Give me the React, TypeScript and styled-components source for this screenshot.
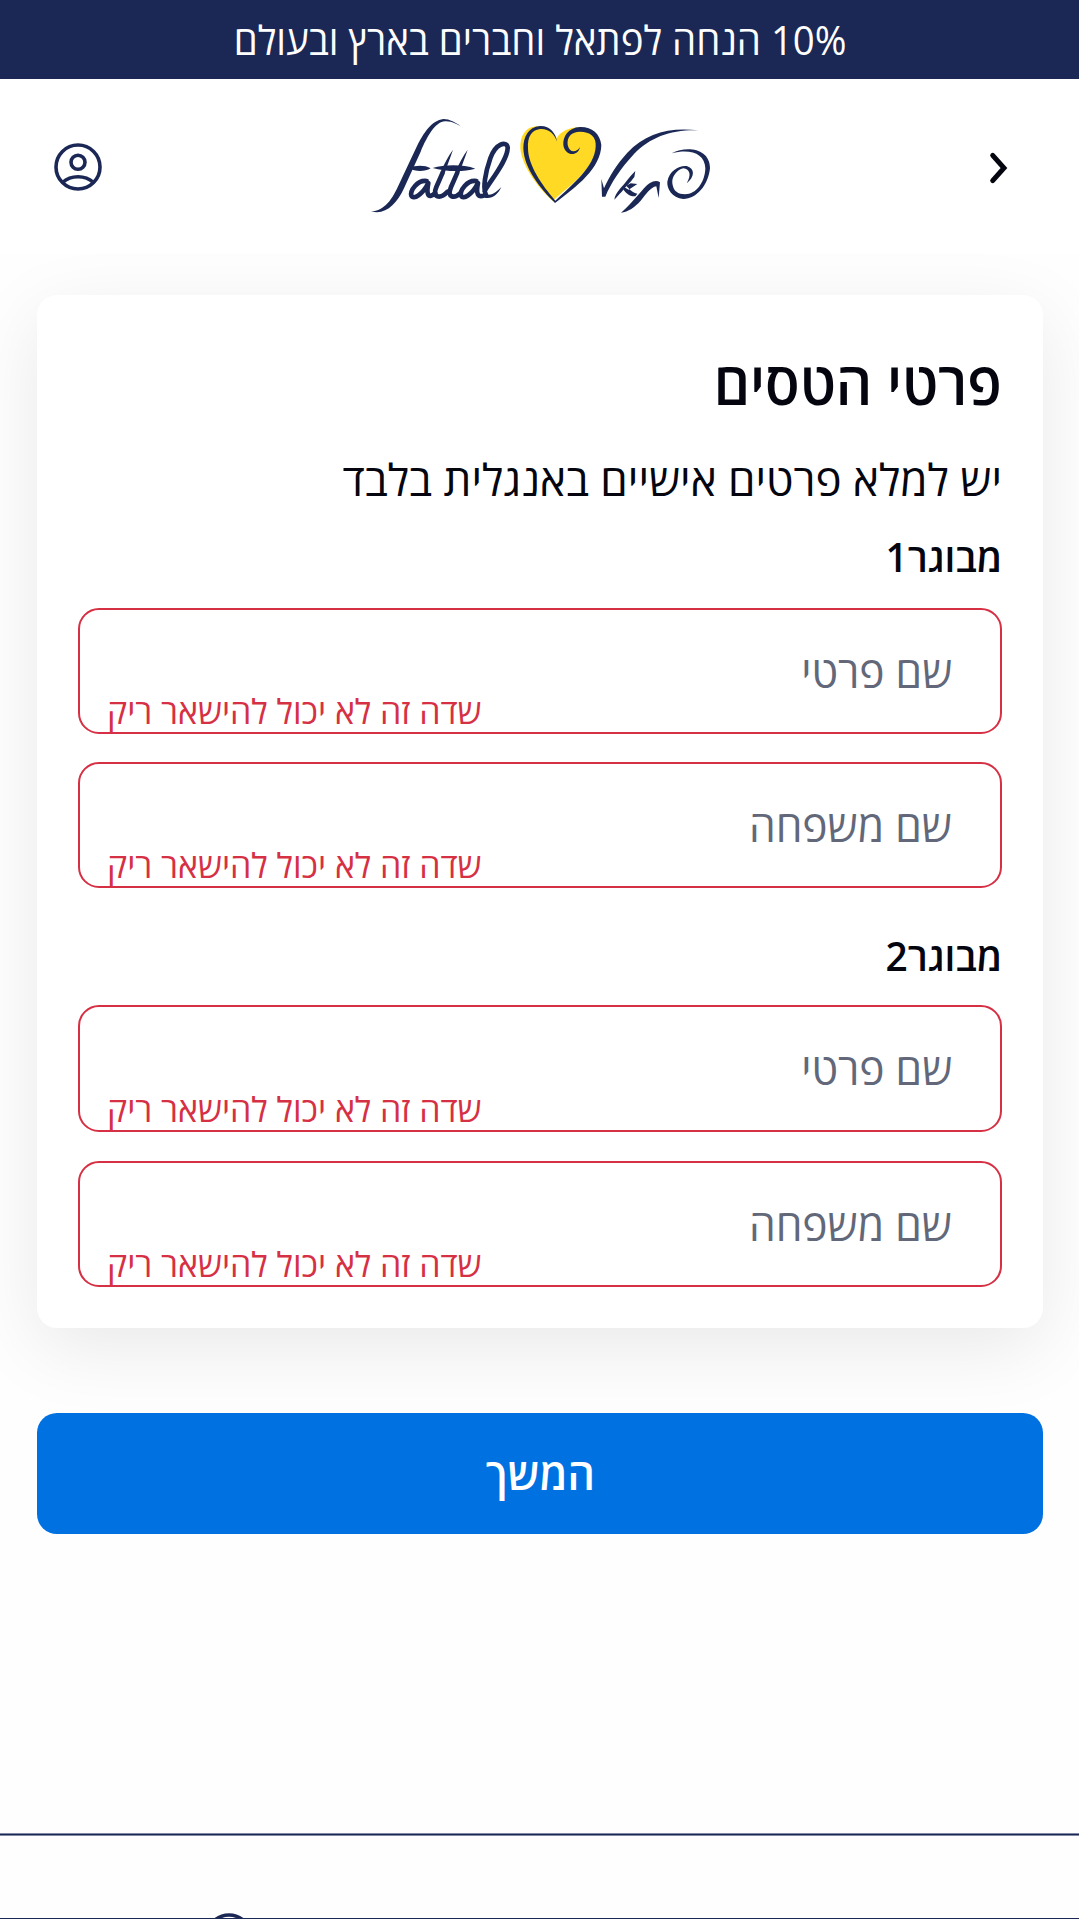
import React from 'react';
import styled, { createGlobalStyle } from 'styled-components';

const navy = '#1b2855';
const ink = '#04050f';
const danger = '#d63044';

const GlobalStyle = createGlobalStyle`
  * { box-sizing: border-box; }
  html, body { margin: 0; background: #fefefe; }
  body { font-family: "Open Sans", "Noto Sans", sans-serif; color: ${ink}; }
  h1, h2, p { margin: 0; }
`;

const Page = styled.div`
  height: 1919px;
  overflow: hidden;
  display: flex;
  flex-direction: column;
  direction: rtl;
`;

const Banner = styled.div`
  height: 79px;
  flex: none;
  display: flex;
  align-items: center;
  justify-content: center;
  padding-left: 2px;
  background: ${navy};
  color: #fff;
`;

const Header = styled.header`
  height: 175px;
  flex: none;
  display: grid;
  grid-template-columns: 160px 1fr 160px;
  align-items: center;
  background: #fff;
  z-index: 1;
`;

const HeaderCell = styled.div<{ $pad?: string }>`
  display: flex;
  justify-content: center;
  padding: ${(p) => p.$pad ?? '0'};
`;

/* A single line of copy, drawn condensed by a horizontal factor from one edge. */
const Line = styled.span<{ $size: number; $weight?: number; $x?: number; $origin?: string }>`
  display: block;
  width: max-content;
  white-space: nowrap;
  line-height: 1;
  font-size: ${(p) => p.$size}px;
  font-weight: ${(p) => p.$weight ?? 400};
  transform: scaleX(${(p) => p.$x ?? 1});
  transform-origin: ${(p) => p.$origin ?? 'right'} center;
`;

const Card = styled.main`
  margin: 41px 36px 0 37px;
  height: 1033px;
  flex: none;
  padding: 57px 41px 0;
  border-radius: 20px;
  background: #fff;
  box-shadow: 0 20px 76px rgba(0, 0, 0, 0.085);
`;

const Title = styled.h1`
  height: 105px;
`;
const Note = styled.p`
  height: 80px;
`;
const GroupTitle = styled.h2<{ $h: number }>`
  height: ${(p) => p.$h}px;
`;

const Fields = styled.div<{ $gap: number; $after?: number }>`
  display: grid;
  gap: ${(p) => p.$gap}px;
  margin-bottom: ${(p) => p.$after ?? 0}px;
`;

const Field = styled.label<{ $h?: number }>`
  height: ${(p) => p.$h ?? 126}px;
  border: 2px solid ${danger};
  border-radius: 21px;
  display: flex;
  flex-direction: column;
  justify-content: space-between;
  padding: 39px 48px 4px 27px;
  color: #626879;
`;

const FieldError = styled.span`
  color: ${danger};
  align-self: flex-end;
`;

const Submit = styled.button`
  margin: 85px 36px 0 37px;
  height: 121px;
  flex: none;
  border: 0;
  border-radius: 20px;
  padding: 0 0 1px 1px;
  background: #0071e1;
  color: #fff;
  font-family: inherit;
  display: flex;
  align-items: center;
  justify-content: center;
`;

const Footer = styled.footer`
  margin-top: 300px;
  height: 85px;
  flex: none;
  border-top: 1px solid ${navy};
  border-bottom: 1px solid ${navy};
  box-shadow: 0 -1px 0 #8088a2, inset 0 1px 0 #8088a2;
  display: flex;
  justify-content: flex-end;
  align-items: flex-start;
  padding: 77px 0 0 204px;
  overflow: hidden;
`;

const Logo = () => (
  <svg width="370" height="120" viewBox="0 0 1110 360" fill="none" strokeLinecap="round" strokeLinejoin="round">
    <g fill={navy}>
      <path d="M312 72C290 52 268 42 250 42C215 46 190 85 170 125L116 240C98 280 75 318 33 319C75 332 110 298 132 250L182 140C202 92 227 50 255 49C275 48 295 58 312 72Z" />
      <path d="M148 190C165 180 195 180 212 190C195 201 165 201 148 190Z" />
      <path d="M218 189C255 178 310 178 346 191C310 202 255 200 218 189Z" />
    </g>
    <g stroke={navy} strokeWidth="14">
      <path d="M200 228C172 224 150 257 154 272C160 286 188 268 205 234C198 270 205 283 226 264" />
      <path d="M247 205L229 246C215 278 240 284 263 260" />
      <path d="M291 205L273 246C260 278 282 282 302 264" />
      <path d="M349 228C321 224 299 257 303 272C309 286 337 268 354 234C347 268 354 278 373 271" />
      <path d="M374 258C385 235 445 165 443 127C440 107 407 115 391 160C377 200 367 250 378 270" />
    </g>
    <path fill={navy} d="M279 134C265 153 252 178 241 202L253 208C260 185 270 160 279 134ZM323 134C309 153 296 178 285 202L297 208C304 185 314 160 323 134ZM374 266C395 276 412 258 424 246C414 268 395 284 374 278Z" />
    <g transform="translate(420 0)">
      <path fill="#ffd923" d="M170 100C160 75 135 63 108 64C75 66 60 95 61 130C65 180 110 245 158 288C200 250 275 200 290 130C300 90 275 68 240 67C210 66 180 80 170 100Z" />
      <g fill={navy}>
        <path d="M171 110C168 85 150 62 120 63C85 66 70 95 70 130C72 190 120 250 165 294C230 245 303 190 304 120C300 85 275 65 240 66C205 68 188 95 190 120C195 155 235 155 240 126C228 145 208 143 203 120C200 95 215 80 240 80C270 80 290 95 287 125C284 185 215 240 166 287C125 240 84 180 84 130C82 95 95 75 120 72C145 70 163 85 171 110Z" />
        <path d="M304 222L306 275L316 275C332 235 362 190 402 147C452 97 510 74 595 76C510 66 438 83 382 143C350 178 328 215 312 250Z" />
        <path d="M343 284C346 262 366 245 378 230C388 218 396 208 406 198L403 216C390 234 380 242 372 252C362 264 352 274 343 284Z" />
        <path d="M363 323C385 305 410 275 432 250C448 232 466 222 480 232L476 279L469 244C452 246 438 268 422 287C404 307 385 320 363 323Z" />
        <path d="M515 145C560 122 630 130 630 190C625 240 590 282 550 282C515 278 500 250 502 230C508 195 540 180 560 183C585 190 585 215 560 235C575 210 570 193 550 190C530 195 515 215 517 235C520 260 535 268 555 268C590 268 615 230 616 190C615 145 570 130 515 145Z" />
        <path d="M374 238C384 246 392 262 412 266L406 274C386 275 378 262 370 254ZM412 237L392 235L372 246L386 254Z" />
      </g>
    </g>
  </svg>
);

const UserIcon = () => (
  <svg width="50" height="50" viewBox="0 0 50 50" fill="none" stroke={navy} strokeWidth="3.6">
    <circle cx="25" cy="25" r="22" />
    <circle cx="25" cy="20.3" r="7" />
    <path d="M9.5 40.5C18 32.8 32 32.8 40.5 40.5" />
  </svg>
);

const ChevronIcon = () => (
  <svg width="24" height="36" viewBox="0 0 24 36" fill="none" stroke={ink} strokeWidth="5" strokeLinecap="round">
    <path d="M6.7 5.3L18 18L6.7 30.7" />
  </svg>
);

const NameField = ({ label, h }: { label: string; h?: number }) => (
  <Field $h={h}>
    <Line $size={44} $x={0.967}>{label}</Line>
    <FieldError>
      <Line $size={34} $x={0.997} $origin="left">שדה זה לא יכול להישאר ריק</Line>
    </FieldError>
  </Field>
);

export default function App() {
  return (
    <>
      <GlobalStyle />
      <Page>
        <Banner>
          <Line $size={40} $x={0.96} $origin="center">10% הנחה לפתאל וחברים בארץ ובעולם</Line>
        </Banner>
        <Header>
          <HeaderCell $pad="2px 2px 0 0"><ChevronIcon /></HeaderCell>
          <HeaderCell $pad="0 0 3px 11px"><Logo /></HeaderCell>
          <HeaderCell $pad="1px 4px 0 0"><UserIcon /></HeaderCell>
        </Header>
        <Card>
          <Title><Line $size={60} $x={0.945} $weight={600}>פרטי הטסים</Line></Title>
          <Note><Line $size={44}>יש למלא פרטים אישיים באנגלית בלבד</Line></Note>
          <GroupTitle $h={71}><Line $size={39} $x={0.995} $weight={600}>מבוגר1</Line></GroupTitle>
          <Fields $gap={28} $after={48}>
            <NameField label="שם פרטי" />
            <NameField label="שם משפחה" />
          </Fields>
          <GroupTitle $h={69}><Line $size={39} $x={0.995} $weight={600}>מבוגר2</Line></GroupTitle>
          <Fields $gap={29}>
            <NameField label="שם פרטי" h={127} />
            <NameField label="שם משפחה" />
          </Fields>
        </Card>
        <Submit><Line $size={44} $x={0.97} $weight={600} $origin="center">המשך</Line></Submit>
        <Footer><UserIcon /></Footer>
      </Page>
    </>
  );
}
